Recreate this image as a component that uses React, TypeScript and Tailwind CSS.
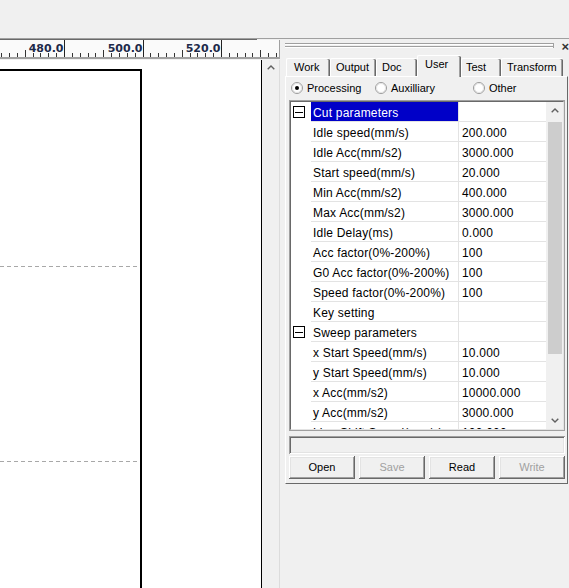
import React from 'react'

type Row = { name: string; value?: string; group?: boolean; selected?: boolean }

const rows: Row[] = [
  { name: 'Cut parameters', group: true, selected: true },
  { name: 'Idle speed(mm/s)', value: '200.000' },
  { name: 'Idle Acc(mm/s2)', value: '3000.000' },
  { name: 'Start speed(mm/s)', value: '20.000' },
  { name: 'Min Acc(mm/s2)', value: '400.000' },
  { name: 'Max Acc(mm/s2)', value: '3000.000' },
  { name: 'Idle Delay(ms)', value: '0.000' },
  { name: 'Acc factor(0%-200%)', value: '100' },
  { name: 'G0 Acc factor(0%-200%)', value: '100' },
  { name: 'Speed factor(0%-200%)', value: '100' },
  { name: 'Key setting' },
  { name: 'Sweep parameters', group: true },
  { name: 'x Start Speed(mm/s)', value: '10.000' },
  { name: 'y Start Speed(mm/s)', value: '10.000' },
  { name: 'x Acc(mm/s2)', value: '10000.000' },
  { name: 'y Acc(mm/s2)', value: '3000.000' },
  { name: 'Line Shift Speed(mm/s)', value: '100.000' },
]

const tabs = [
  { label: 'Work', cls: 'w-[44px] pl-[7px]' },
  { label: 'Output', cls: 'w-[46px] pl-[5px]' },
  { label: 'Doc', cls: 'w-[41px] pl-[5px]' },
  { label: 'User', cls: 'w-[44px] pl-[7px]', active: true },
  { label: 'Test', cls: 'w-[40px] pl-[4px]' },
  { label: 'Transform', cls: 'w-[62px] pl-[5px]' },
]

function Ruler() {
  const ticks: React.ReactNode[] = []
  const labels: React.ReactNode[] = []
  for (let i = 0; i < 40; i++) {
    const x = Math.round(-14.5 + i * 7.85) + 0.5
    if (x < 0 || x > 278) continue
    if (i % 10 === 0) {
      ticks.push(<line key={i} x1={x} y1={0} x2={x} y2={17} stroke="#222" />)
      labels.push(
        <text key={'l' + i} x={x - 1} y={12} textAnchor="end" fontSize="11" fontWeight="bold" fill="#1e2a4a" fontFamily="'DejaVu Sans', sans-serif">
          {(460 + (i / 10) * 20).toFixed(1)}
        </text>
      )
    } else if (i % 5 === 0) {
      ticks.push(<line key={i} x1={x} y1={10} x2={x} y2={17} stroke="#333" />)
    } else {
      ticks.push(<line key={i} x1={x} y1={13} x2={x} y2={17} stroke="#333" />)
    }
  }
  return (
    <svg width="279" height="17" className="block">
      {ticks}
      {labels}
    </svg>
  )
}

function Chevron({ down }: { down?: boolean }) {
  return (
    <svg width="8" height="5" viewBox="0 0 8 5">
      <path d={down ? 'M0.7 0.7 L4 4 L7.3 0.7' : 'M0.7 4.3 L4 1 L7.3 4.3'} fill="none" stroke="#606060" strokeWidth="1.4" />
    </svg>
  )
}

function Radio({ checked }: { checked?: boolean }) {
  return (
    <svg width="12" height="12" viewBox="0 0 12 12" className="shrink-0">
      <circle cx="6" cy="6" r="5.5" fill="#fff" stroke="#9a9a9a" />
      <circle cx="6" cy="6" r="4.5" fill="none" stroke="#e3e3e3" />
      {checked && <circle cx="6" cy="6" r="2" fill="#000" />}
    </svg>
  )
}

function CollapseBox() {
  return (
    <div className="w-[12px] h-[12px] border border-black bg-white flex items-center justify-center">
      <div className="w-[8px] h-[1px] bg-black" />
    </div>
  )
}

function LeftPane() {
  return (
    <div className="w-[280px] flex flex-col">
      <div className="h-[1px] bg-[#a0a0a0]" />
      <div className="h-[1px] w-[257px] bg-[#696969]" />
      <div className="h-[17px] bg-[#fafafa] flex">
        <Ruler />
        <div className="w-[1px] bg-[#a0a0a0]" />
      </div>
      <div className="h-[2px] bg-[#a0a0a0]" />
      <div className="h-[1px] bg-[#f0f0f0]" />
      <div className="flex flex-1 min-h-0">
        <div className="w-[261px] bg-white relative">
          <svg width="261" height="528" className="absolute inset-0">
            <path d="M0 10 H141 V528" fill="none" stroke="#000" strokeWidth="2" />
            <line x1="0" y1="206.5" x2="140" y2="206.5" stroke="#a8a8a8" strokeDasharray="4 3" />
            <line x1="0" y1="401.5" x2="140" y2="401.5" stroke="#a8a8a8" strokeDasharray="4 3" />
          </svg>
        </div>
        <div className="w-[1px] bg-black" />
        <div className="w-[17px] bg-[#f0f0f0] flex justify-center pt-[5px]">
          <Chevron />
        </div>
        <div className="w-[1px] bg-[#dcdcdc]" />
      </div>
    </div>
  )
}

function PropertyGrid() {
  return (
    <div className="w-[276px] h-[331px] border border-[#a0a0a0]">
      <div className="w-full h-full border border-[#696969] border-r-[#e3e3e3] border-b-[#e3e3e3] flex bg-white overflow-hidden">
        <div className="w-[255px] flex flex-col">
          {rows.map((r) => (
            <div key={r.name} className="flex h-[20px] shrink-0 text-[12px] leading-[22px] tracking-[0.2px]">
              <div className="w-[20px] flex items-center pl-[2px]">{r.group && <CollapseBox />}</div>
              <div
                className={
                  'w-[148px] border-b border-r border-[#e3e3e3] pl-[2px] whitespace-nowrap overflow-hidden ' +
                  (r.selected ? 'bg-[#0000c8] text-white' : 'text-black')
                }
              >
                {r.name}
              </div>
              <div className="w-[87px] border-b border-[#e3e3e3] pl-[3px] text-black whitespace-nowrap overflow-hidden">{r.value}</div>
            </div>
          ))}
        </div>
        <div className="w-[17px] bg-[#f0f0f0] flex flex-col items-center">
          <div className="h-[17px] flex items-center justify-center">
            <Chevron />
          </div>
          <div className="mt-[3px] h-[232px] w-[14px] bg-[#cdcdcd]" />
          <div className="flex-1" />
          <div className="h-[17px] flex items-center justify-center">
            <Chevron down />
          </div>
        </div>
      </div>
    </div>
  )
}

function Button({ label, disabled }: { label: string; disabled?: boolean }) {
  return (
    <div
      className={
        'flex-1 h-[23px] bg-[#f0f0f0] flex items-center justify-center text-[11px] shadow-[inset_-1px_-1px_0_#696969,inset_1px_1px_0_#ffffff,inset_-2px_-2px_0_#a0a0a0,inset_2px_2px_0_#e3e3e3] ' +
        (disabled ? 'text-[#a0a0a0]' : 'text-black')
      }
    >
      {label}
    </div>
  )
}

function RightPane() {
  return (
    <div className="flex-1 flex flex-col border-t border-[#a0a0a0] overflow-hidden">
      {/* dock grip */}
      <div className="h-[16px] flex items-start pl-[5px]">
        <div className="mt-[4px] w-[274px] flex flex-col">
          <div className="h-[1px] bg-[#a0a0a0]" />
          <div className="h-[1px] bg-white" />
          <div className="h-[1px]" />
          <div className="h-[1px] bg-[#a0a0a0]" />
          <div className="h-[1px] bg-white" />
        </div>
        <div className="mt-[4px] w-[1px] h-[5px] bg-[#a0a0a0]" />
        <div className="ml-[7px] mt-[1px] text-[13px] font-bold leading-[13px] text-[#333] shrink-0">×</div>
      </div>
      {/* tabs */}
      <div className="h-[21px] flex items-end pl-[6px] relative z-10 text-[11px] leading-[14px]">
        {tabs.map((t) =>
          t.active ? (
            <div
              key={t.label}
              className={t.cls + ' h-[22px] -mb-[1px] pt-[1px] bg-[#f0f0f0] border-t border-l border-white rounded-t-[2px] shadow-[inset_-1px_0_0_#696969,inset_-2px_0_0_#a0a0a0]'}
            >
              {t.label}
            </div>
          ) : (
            <div
              key={t.label}
              className={t.cls + ' h-[18px] pt-[1px] bg-[#f0f0f0] border-t border-l border-white rounded-t-[2px] shadow-[inset_-1px_0_0_#696969,inset_-2px_0_0_#a0a0a0]'}
            >
              {t.label}
            </div>
          )
        )}
      </div>
      {/* tab page */}
      <div className="ml-[5px] w-[283px] h-[408px] border border-white border-r-[#696969] border-b-[#696969] pl-[3px] pt-[4px] flex flex-col">
        <div className="h-[14px] flex items-center text-[11px] text-black">
          <div className="w-[84px] ml-[2px] flex items-center gap-[4px]">
            <Radio checked />
            <span>Processing</span>
          </div>
          <div className="w-[98px] flex items-center gap-[4px]">
            <Radio />
            <span>Auxilliary</span>
          </div>
          <div className="flex items-center gap-[4px]">
            <Radio />
            <span>Other</span>
          </div>
        </div>
        <div className="mt-[5px]">
          <PropertyGrid />
        </div>
        <div className="mt-[5px] w-[276px] h-[18px] bg-[#f0f0f0] shadow-[inset_1px_1px_0_#a0a0a0,inset_-1px_-1px_0_#ffffff,inset_2px_2px_0_#696969,inset_-2px_-2px_0_#e3e3e3]" />
        <div className="mt-[2px] w-[276px] flex gap-[4px]">
          <Button label="Open" />
          <Button label="Save" disabled />
          <Button label="Read" />
          <Button label="Write" disabled />
        </div>
      </div>
    </div>
  )
}

export default function App() {
  return (
    <div className="w-[569px] h-[588px] overflow-hidden bg-[#f0f0f0] flex flex-col font-['Liberation_Sans',Arial,sans-serif]">
      <div className="h-[38px] shrink-0" />
      <div className="flex flex-1 min-h-0">
        <LeftPane />
        <RightPane />
      </div>
    </div>
  )
}
